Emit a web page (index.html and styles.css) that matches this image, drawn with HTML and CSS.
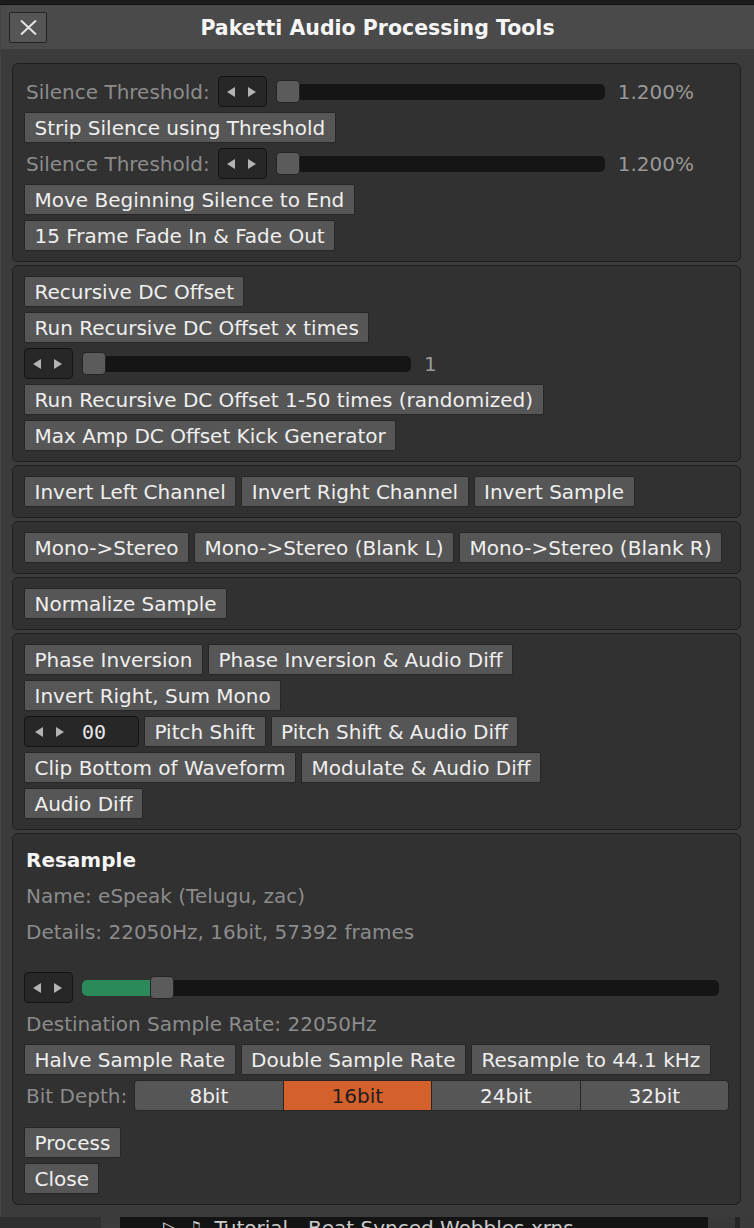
FILE: index.html
```html
<!DOCTYPE html>
<html>
<head>
<meta charset="utf-8">
<title>Paketti Audio Processing Tools</title>
<link rel="stylesheet" href="styles.css">
</head>
<body>
<div class="bgtop"></div>
<div class="window">
  <div class="titlebar">
    <button class="xbtn" aria-label="Close"><svg width="17" height="15" viewBox="0 0 17 15"><path d="M1 0.5 L16 14.5 M16 0.5 L1 14.5" stroke="#e6e6e6" stroke-width="2" fill="none"/></svg></button>
    <div class="title">Paketti Audio Processing Tools</div>
    <div></div>
  </div>
  <div class="content">
    <section class="panel first">
      <div class="row">
        <span class="label lead tl">Silence Threshold:</span>
        <div class="vbox"><svg class="arrows" width="30" height="10" viewBox="0 0 30 10"><polygon points="8,0 8,10 0,5" fill="#b4b4b4"/><polygon points="21,0 29,5 21,10" fill="#b4b4b4"/></svg></div>
        <div class="slider short"><div class="fill tiny"></div><div class="thumb"></div></div>
        <span class="val">1.200%</span>
      </div>
      <div class="row"><span class="btn">Strip Silence using Threshold</span></div>
      <div class="row">
        <span class="label lead tl">Silence Threshold:</span>
        <div class="vbox"><svg class="arrows" width="30" height="10" viewBox="0 0 30 10"><polygon points="8,0 8,10 0,5" fill="#b4b4b4"/><polygon points="21,0 29,5 21,10" fill="#b4b4b4"/></svg></div>
        <div class="slider short"><div class="fill tiny"></div><div class="thumb"></div></div>
        <span class="val">1.200%</span>
      </div>
      <div class="row"><span class="btn">Move Beginning Silence to End</span></div>
      <div class="row"><span class="btn">15 Frame Fade In &amp; Fade Out</span></div>
    </section>

    <section class="panel">
      <div class="row"><span class="btn">Recursive DC Offset</span></div>
      <div class="row"><span class="btn">Run Recursive DC Offset x times</span></div>
      <div class="row">
        <div class="vbox"><svg class="arrows" width="30" height="10" viewBox="0 0 30 10"><polygon points="8,0 8,10 0,5" fill="#b4b4b4"/><polygon points="21,0 29,5 21,10" fill="#b4b4b4"/></svg></div>
        <div class="slider short"><div class="thumb"></div></div>
        <span class="val">1</span>
      </div>
      <div class="row"><span class="btn">Run Recursive DC Offset 1-50 times (randomized)</span></div>
      <div class="row"><span class="btn">Max Amp DC Offset Kick Generator</span></div>
    </section>

    <section class="panel">
      <div class="row"><span class="btn">Invert Left Channel</span><span class="btn">Invert Right Channel</span><span class="btn">Invert Sample</span></div>
    </section>

    <section class="panel">
      <div class="row"><span class="btn">Mono-&gt;Stereo</span><span class="btn">Mono-&gt;Stereo (Blank L)</span><span class="btn">Mono-&gt;Stereo (Blank R)</span></div>
    </section>

    <section class="panel">
      <div class="row"><span class="btn">Normalize Sample</span></div>
    </section>

    <section class="panel">
      <div class="row"><span class="btn">Phase Inversion</span><span class="btn">Phase Inversion &amp; Audio Diff</span></div>
      <div class="row"><span class="btn">Invert Right, Sum Mono</span></div>
      <div class="row">
        <div class="vbox wide"><svg class="arrows" width="30" height="10" viewBox="0 0 30 10"><polygon points="8,0 8,10 0,5" fill="#b4b4b4"/><polygon points="21,0 29,5 21,10" fill="#b4b4b4"/></svg><span class="num">00</span></div>
        <span class="btn">Pitch Shift</span><span class="btn">Pitch Shift &amp; Audio Diff</span>
      </div>
      <div class="row"><span class="btn">Clip Bottom of Waveform</span><span class="btn">Modulate &amp; Audio Diff</span></div>
      <div class="row"><span class="btn">Audio Diff</span></div>
    </section>

    <section class="panel last">
      <div class="row"><span class="heading lead">Resample</span></div>
      <div class="row"><span class="label lead">Name: eSpeak (Telugu, zac)</span></div>
      <div class="row"><span class="label lead">Details: 22050Hz, 16bit, 57392 frames</span></div>
      <div class="spacer-l"></div>
      <div class="row">
        <div class="vbox"><svg class="arrows" width="30" height="10" viewBox="0 0 30 10"><polygon points="8,0 8,10 0,5" fill="#b4b4b4"/><polygon points="21,0 29,5 21,10" fill="#b4b4b4"/></svg></div>
        <div class="slider long"><div class="fill rate"></div><div class="thumb rate"></div></div>
      </div>
      <div class="row"><span class="label lead">Destination Sample Rate: 22050Hz</span></div>
      <div class="row"><span class="btn">Halve Sample Rate</span><span class="btn">Double Sample Rate</span><span class="btn">Resample to 44.1 kHz</span></div>
      <div class="row bits">
        <span class="label lead">Bit Depth:</span>
        <div class="seg">
          <span class="opt">8bit</span>
          <span class="opt on">16bit</span>
          <span class="opt">24bit</span>
          <span class="opt">32bit</span>
        </div>
      </div>
      <div class="spacer-s"></div>
      <div class="row"><span class="btn">Process</span></div>
      <div class="row"><span class="btn">Close</span></div>
    </section>
  </div>
</div>
<div class="bgbottom">
  <div class="bb a"></div>
  <div class="bb b"></div>
  <div class="bb list"><span class="tri">▷</span><span class="note">♫</span><span class="fname">Tutorial - Beat Synced Wobbles.xrns</span></div>
  <div class="bb c"></div>
  <div class="bb d"></div>
  <div class="bb e"></div>
</div>
</body>
</html>
```
FILE: styles.css
```css
* { box-sizing: border-box; }
html, body { margin: 0; padding: 0; }
body {
  width: 754px;
  height: 1228px;
  overflow: hidden;
  background: #1b1b1b;
  font-family: "DejaVu Sans", "Liberation Sans", sans-serif;
  font-size: 20px;
  color: #ececec;
}
.bgtop {
  height: 5px;
  background: #1c1c1c;
  border-bottom: 1px solid #101010;
}
.window {
  height: 1212px;
  background: #3b3b3b;
  display: flex;
  flex-direction: column;
  border-left: 1px solid #444444;
}
.titlebar {
  height: 45px;
  flex: none;
  background: #4a4a4a;
  display: grid;
  grid-template-columns: 1fr auto 1fr;
  align-items: start;
  border-bottom: 1px solid #3e3e3e;
}
.xbtn {
  margin: 7px 0 0 8px;
  width: 38px;
  height: 31px;
  padding: 0;
  background: #555555;
  border: 1px solid #232323;
  border-radius: 2px;
  display: flex;
  align-items: center;
  justify-content: center;
}
.title {
  font-weight: bold;
  font-size: 20.5px;
  line-height: 44px;
  padding-top: 1px;
  color: #f5f5f5;
  white-space: nowrap;
}
.content {
  flex: 1;
  padding: 13px 13px 11px 11px;
  display: flex;
  flex-direction: column;
  gap: 3px;
}
.panel {
  background: #313131;
  border: 1px solid #1f1f1f;
  border-radius: 6px;
  padding: 10px 11px;
  display: flex;
  flex-direction: column;
  gap: 5px;
}
.panel.first { padding-top: 12px; }
.row {
  display: flex;
  align-items: center;
  gap: 5px;
  height: 31px;
}
.btn {
  height: 31px;
  padding: 1px 9.5px 0;
  background: #565656;
  border: 1px solid #262626;
  border-radius: 2px;
  line-height: 29px;
  white-space: nowrap;
  color: #efefef;
}
.label {
  color: #8c8c8c;
  line-height: 30px;
  padding-top: 1px;
  white-space: nowrap;
}
.lead { margin-left: 2px; }
.tl { margin-right: 3px; }
.heading {
  font-weight: bold;
  font-size: 20px;
  color: #f5f5f5;
  line-height: 30px;
  padding-top: 1px;
}
.val {
  color: #999999;
  white-space: nowrap;
  padding-top: 1px;
}
.vbox {
  width: 49px;
  height: 31px;
  flex: none;
  background: #272727;
  border: 1px solid #141414;
  border-radius: 4px;
  display: flex;
  align-items: center;
  padding-left: 8px;
}
.vbox.wide { width: 115px; padding-left: 10px; }
.vbox .num {
  font-family: "DejaVu Sans Mono", monospace;
  font-size: 20px;
  color: #e8e8e8;
  margin-left: 17px;
}
.slider {
  position: relative;
  height: 16px;
  flex: none;
  background: #151515;
  border-radius: 5px;
  margin: 0 8px 0 4px;
}
.slider.short { width: 329px; }
.slider.long { width: 637px; }
.fill {
  position: absolute;
  left: 0;
  top: 0;
  bottom: 0;
  background: #2b8a5a;
  border-radius: 5px 0 0 5px;
}
.fill.tiny { width: 3px; }
.fill.rate { width: 75px; }
.thumb {
  position: absolute;
  left: 0;
  top: -3.5px;
  width: 24px;
  height: 23px;
  background: #5b5b5b;
  border: 1px solid #242424;
  border-radius: 4px;
}
.thumb.rate { left: 68px; }
.spacer-l { height: 15px; }
.spacer-s { height: 6px; }
.row.bits { gap: 7px; }
.seg {
  width: 595px;
  height: 31px;
  display: flex;
  border: 1px solid #262626;
  border-radius: 4px;
  overflow: hidden;
}
.opt {
  flex: 1;
  text-align: center;
  line-height: 28px;
  padding-top: 1px;
  background: #565656;
  color: #f0f0f0;
  border-left: 1px solid #262626;
}
.opt:first-child { border-left: none; }
.opt.on {
  background: #d4602c;
  color: #1e1e1e;
}
.bgbottom {
  height: 11px;
  display: flex;
  overflow: hidden;
}
.bb { height: 11px; }
.bb.a { width: 101px; background: #2f2f2f; }
.bb.b { width: 19px; background: #3c3c3c; }
.bb.list {
  width: 588px;
  background: #131313;
  color: #cccccc;
  font-size: 20px;
  line-height: 22px;
  height: 11px;
  padding-left: 43px;
  white-space: nowrap;
  display: flex;
  gap: 8px;
  overflow: hidden;
}
.bb.list .note { font-size: 18px; }
.bb.list .fname { margin-left: 4px; }
.bb.c { width: 27px; background: #383838; }
.bb.d { width: 5px; background: #252525; }
.bb.e { flex: 1; background: #3a3a3a; }
```
